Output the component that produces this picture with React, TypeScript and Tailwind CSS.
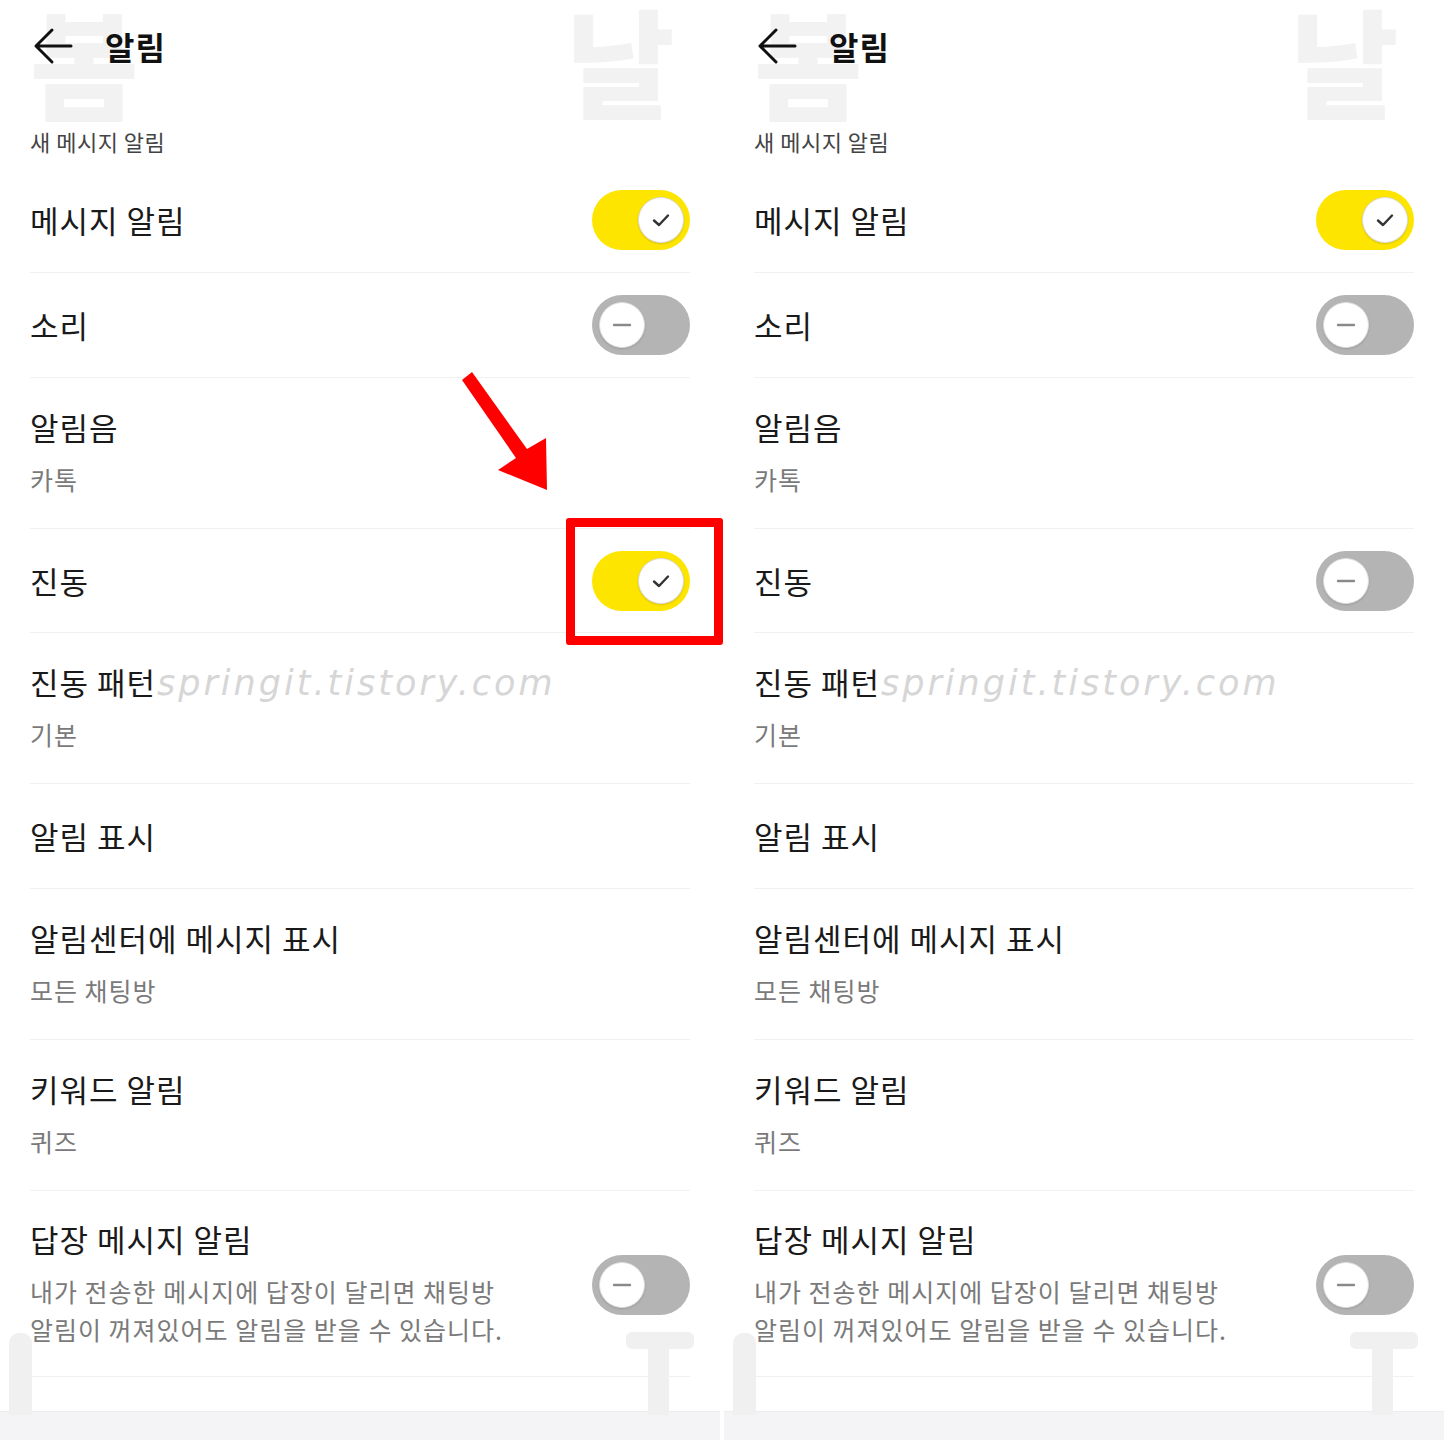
import React from "react";

const KR = { fontFamily: '"Noto Sans CJK KR", "Noto Sans", sans-serif' };

function Toggle({ on }: { on: boolean }) {
  return (
    <div
      className={
        "relative w-[98px] h-[60px] rounded-full shrink-0 " +
        (on ? "bg-[#fee500]" : "bg-[#b4b4b4]")
      }
    >
      <div
        className={
          "absolute top-[7px] w-[46px] h-[46px] rounded-full bg-white border border-[#dcdcdc] shadow-[0_1px_2px_rgba(0,0,0,0.15)] flex items-center justify-center " +
          (on ? "right-[6px]" : "left-[7px]")
        }
      >
        {on ? (
          <svg width="22" height="22" viewBox="0 0 22 22">
            <path d="M4 11.5 L9 16 L18 6.5" fill="none" stroke="#333" strokeWidth="2.4" strokeLinecap="round" strokeLinejoin="round" />
          </svg>
        ) : (
          <svg width="22" height="22" viewBox="0 0 22 22">
            <path d="M3 11 H19" fill="none" stroke="#8a8a8a" strokeWidth="2.4" strokeLinecap="round" />
          </svg>
        )}
      </div>
    </div>
  );
}

function SingleRow({ title, h, toggle }: { title: string; h: string; toggle?: boolean }) {
  return (
    <div className={"box-border flex items-center justify-between border-b border-[#f1f1f1] " + h}>
      <span className="text-[31px] leading-[40px] tracking-[1px] text-[#1a1a1a]">{title}</span>
      {toggle !== undefined && <Toggle on={toggle} />}
    </div>
  );
}

function DoubleRow({ title, sub }: { title: string; sub: string }) {
  return (
    <div className="box-border h-[151px] pt-[29px] border-b border-[#f1f1f1] flex flex-col">
      <span className="text-[31px] leading-[40px] tracking-[1px] text-[#1a1a1a]">{title}</span>
      <span className="mt-[16px] text-[25px] leading-[32px] tracking-[1px] text-[#7a7a7a]">{sub}</span>
    </div>
  );
}

function Panel({ vib }: { vib: boolean }) {
  return (
    <div className="relative w-[720px] h-[1440px] shrink-0 flex flex-col bg-white overflow-hidden" style={KR}>
      {/* faint watermark glyphs */}
      <div className="absolute left-[30px] top-[2px] text-[118px] leading-[118px] font-black text-[#f2f2f2] select-none">봄</div>
      <div className="absolute left-[566px] top-[0px] text-[118px] leading-[118px] font-black text-[#f2f2f2] select-none">날</div>
      <div className="absolute left-[9px] top-[1333px] w-[23px] h-[82px] rounded-t-[10px] bg-[#f0f0f0] z-20" />
      <div className="absolute left-[626px] top-[1332px] w-[68px] h-[17px] rounded-[6px] bg-[#f0f0f0] z-20" />
      <div className="absolute left-[648px] top-[1348px] w-[21px] h-[67px] bg-[#f0f0f0] z-20" />
      <div className="absolute left-[157px] top-[658px] text-[35px] leading-[50px] italic font-extralight tracking-[3px] text-[#d6d6d6] z-20" style={{ fontFamily: '"DejaVu Sans", sans-serif' }}>
        springit.tistory.com
      </div>

      <div className="relative z-10 h-[92px] flex items-center pl-[33px]">
        <svg width="40" height="40" viewBox="0 0 40 40">
          <path d="M38 20 H3 M19 4 L3 20 L19 36" fill="none" stroke="#111" strokeWidth="3" strokeLinecap="round" strokeLinejoin="round" />
        </svg>
        <span className="ml-[32px] text-[32px] leading-[40px] tracking-[1px] font-bold text-[#111]">알림</span>
      </div>
      <div className="relative z-10 h-[76px] px-[30px] flex items-start">
        <span className="mt-[35px] text-[22px] leading-[28px] tracking-[0.5px] text-[#444]">새 메시지 알림</span>
      </div>

      <div className="relative z-10 px-[30px] flex flex-col">
        <SingleRow title="메시지 알림" h="h-[105px]" toggle={true} />
        <SingleRow title="소리" h="h-[105px]" toggle={false} />
        <DoubleRow title="알림음" sub="카톡" />
        <SingleRow title="진동" h="h-[104px]" toggle={vib} />
        <DoubleRow title="진동 패턴" sub="기본" />
        <SingleRow title="알림 표시" h="h-[105px]" />
        <DoubleRow title="알림센터에 메시지 표시" sub="모든 채팅방" />
        <DoubleRow title="키워드 알림" sub="퀴즈" />
        <div className="box-border h-[186px] pt-[28px] border-b border-[#f1f1f1] flex items-start justify-between">
          <div className="flex flex-col">
            <span className="text-[31px] leading-[40px] tracking-[1px] text-[#1a1a1a]">답장 메시지 알림</span>
            <span className="mt-[13px] text-[25px] leading-[38px] tracking-[1px] text-[#7a7a7a]">
              내가 전송한 메시지에 답장이 달리면 채팅방
              <br />
              알림이 꺼져있어도 알림을 받을 수 있습니다.
            </span>
          </div>
          <div className="mt-[36px]">
            <Toggle on={false} />
          </div>
        </div>
      </div>

      <div className="flex-1" />
      <div className="h-[29px] bg-[#f4f4f6] border-t border-[#ececee]" />
    </div>
  );
}

export default function App() {
  return (
    <div className="relative w-[1444px] h-[1440px] bg-white flex overflow-hidden">
      <Panel vib={true} />
      <div className="w-[4px] shrink-0 bg-white" />
      <Panel vib={false} />

      {/* annotations */}
      <div className="absolute left-[566px] top-[518px] w-[157px] h-[127px] border-[9px] border-[#ff0000] rounded-[3px] z-30" />
      <svg className="absolute left-[440px] top-[360px] z-30" width="130" height="150" viewBox="440 360 130 150">
        <polygon points="462,380 472,372 527,449 546,438 547,490 498,470 516,458" fill="#ff0000" />
      </svg>
    </div>
  );
}
